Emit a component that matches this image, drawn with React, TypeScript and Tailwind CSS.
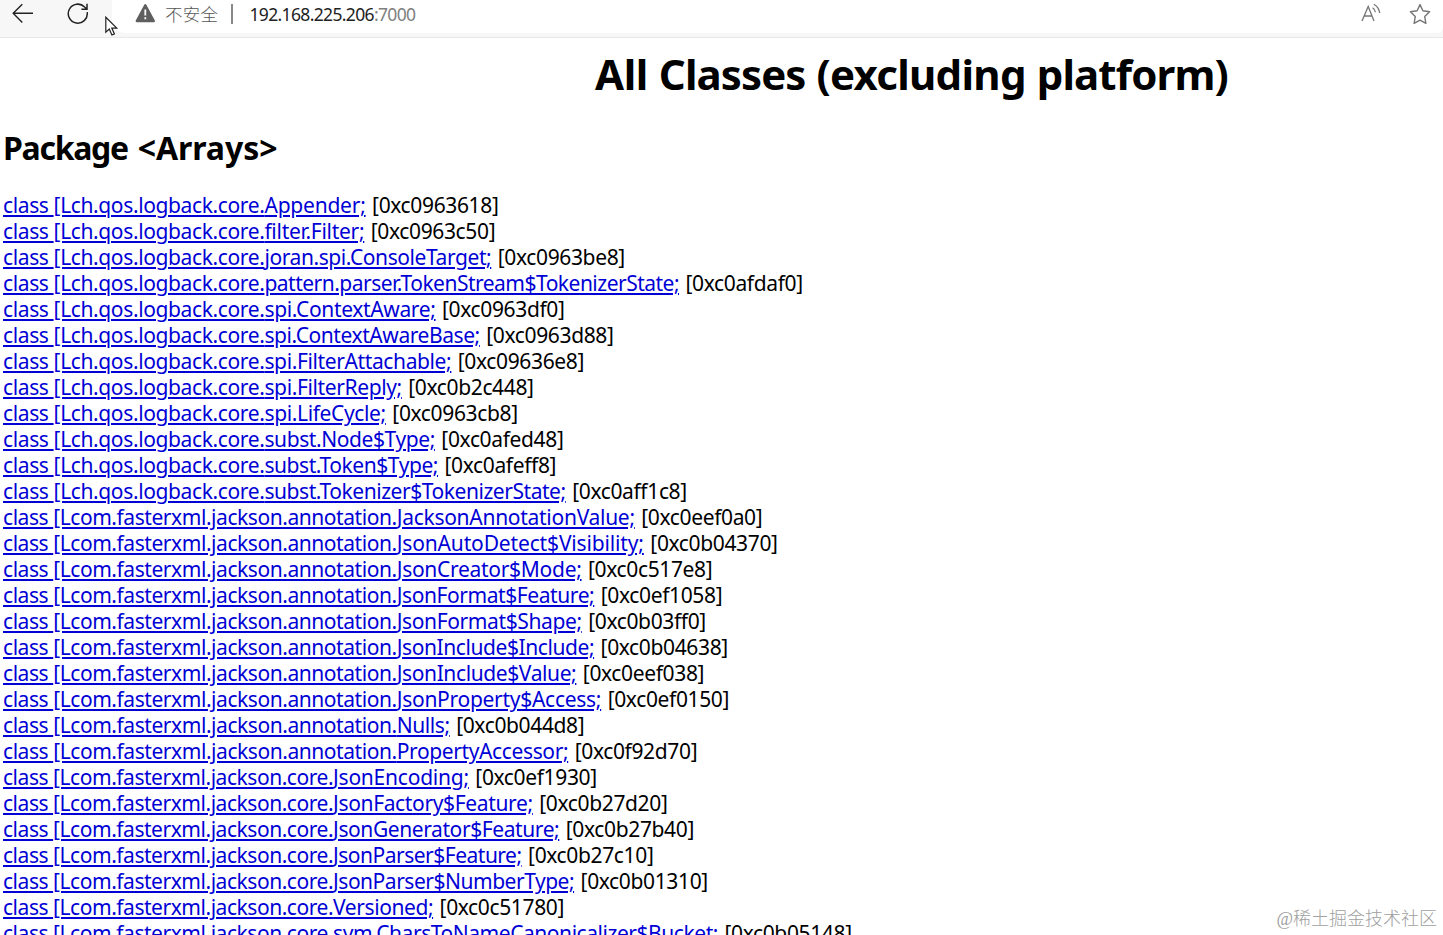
type ClassEntry = {
  name: string;
  address: string;
  tracking: string;
};

type PackageGroup = {
  prefix: string;
  tracking: string;
  classes: ClassEntry[];
};

const groups: PackageGroup[] = [
  {
    prefix: "[Lch.qos.logback.core.",
    tracking: "tracking-[-0.375px]",
    classes: [
      { name: "Appender;", address: "0xc0963618", tracking: "tracking-[-0.22px]" },
      { name: "filter.Filter;", address: "0xc0963c50", tracking: "tracking-[-0.29px]" },
      { name: "joran.spi.ConsoleTarget;", address: "0xc0963be8", tracking: "tracking-[-0.42px]" },
      { name: "pattern.parser.TokenStream$TokenizerState;", address: "0xc0afdaf0", tracking: "tracking-[-0.51px]" },
      { name: "spi.ContextAware;", address: "0xc0963df0", tracking: "tracking-[-0.35px]" },
      { name: "spi.ContextAwareBase;", address: "0xc0963d88", tracking: "tracking-[-0.43px]" },
      { name: "spi.FilterAttachable;", address: "0xc09636e8", tracking: "tracking-[-0.38px]" },
      { name: "spi.FilterReply;", address: "0xc0b2c448", tracking: "tracking-[-0.38px]" },
      { name: "spi.LifeCycle;", address: "0xc0963cb8", tracking: "tracking-[-0.36px]" },
      { name: "subst.Node$Type;", address: "0xc0afed48", tracking: "tracking-[-0.41px]" },
      { name: "subst.Token$Type;", address: "0xc0afeff8", tracking: "tracking-[-0.44px]" },
      { name: "subst.Tokenizer$TokenizerState;", address: "0xc0aff1c8", tracking: "tracking-[-0.45px]" },
    ],
  },
  {
    prefix: "[Lcom.fasterxml.jackson.annotation.",
    tracking: "tracking-[-0.44px]",
    classes: [
      { name: "JacksonAnnotationValue;", address: "0xc0eef0a0", tracking: "tracking-[-0.28px]" },
      { name: "JsonAutoDetect$Visibility;", address: "0xc0b04370", tracking: "tracking-[-0.15px]" },
      { name: "JsonCreator$Mode;", address: "0xc0c517e8", tracking: "tracking-[-0.29px]" },
      { name: "JsonFormat$Feature;", address: "0xc0ef1058", tracking: "tracking-[-0.42px]" },
      { name: "JsonFormat$Shape;", address: "0xc0b03ff0", tracking: "tracking-[-0.38px]" },
      { name: "JsonInclude$Include;", address: "0xc0b04638", tracking: "tracking-[-0.42px]" },
      { name: "JsonInclude$Value;", address: "0xc0eef038", tracking: "tracking-[-0.39px]" },
      { name: "JsonProperty$Access;", address: "0xc0ef0150", tracking: "tracking-[-0.28px]" },
      { name: "Nulls;", address: "0xc0b044d8", tracking: "tracking-[-0.42px]" },
      { name: "PropertyAccessor;", address: "0xc0f92d70", tracking: "tracking-[-0.38px]" },
    ],
  },
  {
    prefix: "[Lcom.fasterxml.jackson.core.",
    tracking: "tracking-[-0.46px]",
    classes: [
      { name: "JsonEncoding;", address: "0xc0ef1930", tracking: "tracking-[-0.23px]" },
      { name: "JsonFactory$Feature;", address: "0xc0b27d20", tracking: "tracking-[-0.35px]" },
      { name: "JsonGenerator$Feature;", address: "0xc0b27b40", tracking: "tracking-[-0.41px]" },
      { name: "JsonParser$Feature;", address: "0xc0b27c10", tracking: "tracking-[-0.5px]" },
      { name: "JsonParser$NumberType;", address: "0xc0b01310", tracking: "tracking-[-0.48px]" },
      { name: "Versioned;", address: "0xc0c51780", tracking: "tracking-[-0.42px]" },
      { name: "sym.CharsToNameCanonicalizer$Bucket;", address: "0xc0b05148", tracking: "tracking-[-0.45px]" },
    ],
  },
];

function Toolbar() {
  return (
    <header className="relative flex h-[38px] shrink-0 border-b border-[#e8e8e8] bg-[#f7f7f7]">
      <div className="flex w-[112px] shrink-0">
        {/* Back */}
        <svg className="ml-[12px] mt-[3px] h-[21px] w-[22px]" viewBox="0 0 22 21" fill="none" stroke="#222" strokeWidth="1.4">
          <path d="M21 10.3H1.5M10.3 1.2 1.2 10.3l9.1 9.1" />
        </svg>

        {/* Reload */}
        <svg className="ml-[33px] mt-[3px] h-[22px] w-[22px]" viewBox="0 0 22 22" fill="none" stroke="#222" strokeWidth="1.5">
          <path d="M20.2 9.2A9.5 9.5 0 1 1 17.6 4l2.4 2.2M20 .8v5.4h-5.6" />
        </svg>
      </div>

      {/* Address bar */}
      <div className="flex h-[33px] flex-1 items-start rounded-bl-[14px] rounded-br-[6px] bg-white font-['Noto_Sans','Noto_Sans_CJK_SC',sans-serif] text-[17.5px] leading-[28px]">
        <svg className="ml-[23px] mt-[3px] h-[20px] w-[21px]" viewBox="0 0 21 20">
          <path d="M10.3 2.2 18.8 18H1.8z" fill="#5f5f5f" stroke="#5f5f5f" strokeWidth="2.4" strokeLinejoin="round" />
          <path d="M10.3 6.6v6M10.3 14.3v2" stroke="#fff" strokeWidth="1.8" />
        </svg>
        <span className="ml-[9px] w-[55px] font-light tracking-[0.2px] text-[#555]">不安全</span>
        <span className="ml-[11px] mt-[4px] h-[20px] w-[1.5px] bg-[#888]" />
        <span className="ml-[17px] flex-1 tracking-[-0.65px] text-[#222]">
          192.168.225.206<span className="text-[#808080]">:7000</span>
        </span>

        {/* Read aloud */}
        <svg className="mr-[28px] mt-[3px] h-[20px] w-[21px]" viewBox="0 0 21 20" fill="none" stroke="#757575" strokeWidth="1.3">
          <path d="M2 18 8.2 3.5 14 18M4.1 13h8.2M12.6 4.8q2.5 1.6 2.8 4.5M13.8 1.2q5.2 3 5.9 8.8" />
        </svg>

        {/* Favorite */}
        <svg className="mr-[12px] mt-[3px] h-[22px] w-[22px]" viewBox="0 0 22 22" fill="none" stroke="#757575" strokeWidth="1.4" strokeLinejoin="round">
          <path d="m11 1.6 2.9 6.2 6.7.9-4.9 4.8 1.2 6.8-5.9-3.2-5.9 3.2 1.2-6.8L1.4 8.7l6.7-.9z" />
        </svg>
      </div>

      {/* Mouse pointer */}
      <svg className="absolute left-[105px] top-[16px] h-[21px] w-[13px]" viewBox="0 0 13 21">
        <path d="M.8 1.2v15l3.5-3.2 2.6 6 2.5-1.1-2.6-5.8h5z" fill="#fff" stroke="#222" strokeWidth="1.2" />
      </svg>
    </header>
  );
}

export default function App() {
  return (
    <div className="relative flex h-[935px] w-[1443px] flex-col overflow-hidden bg-white text-black">
      <Toolbar />

      <main className="pl-[3px] font-['Noto_Sans','Noto_Sans_CJK_SC',sans-serif] text-[21px] leading-[26px]">
        <h1 className="mt-[8px] ml-[592px] whitespace-nowrap text-[42px] leading-[56px] font-bold">
          <span className="tracking-[-0.4px]">All</span>{" "}
          <span className="tracking-[-0.9px]">Classes</span>{" "}
          <span className="tracking-[-0.7px]">(excluding</span>{" "}
          <span className="tracking-[-0.85px]">platform)</span>
        </h1>

        <h2 className="mt-[25px] text-[32px] leading-[42px] font-bold">
          <span className="mr-[1.5px] tracking-[-1.3px]">Package</span>{" "}
          <span className="tracking-[-0.05px]">&lt;Arrays&gt;</span>
        </h2>

        <div className="mt-[23px]">
          {groups.map((group) => (
            <ul key={group.prefix}>
              {group.classes.map((entry) => (
                <li key={entry.name} className="whitespace-nowrap">
                  <a href="#" className="text-[#0000d6] underline decoration-2 underline-offset-2">
                    <span className={group.tracking}>class {group.prefix}</span>
                    <span className={entry.tracking}>{entry.name}</span>
                  </a>{" "}
                  <span className="ml-[1px] tracking-[-0.36px]">[{entry.address}]</span>
                </li>
              ))}
            </ul>
          ))}
        </div>
      </main>

      <div className="absolute right-[6px] bottom-[3px] font-['Liberation_Serif','Noto_Sans_CJK_SC',serif] text-[18px] leading-[26px] font-light text-[#a0a0a0]">
        @稀土掘金技术社区
      </div>
    </div>
  );
}
